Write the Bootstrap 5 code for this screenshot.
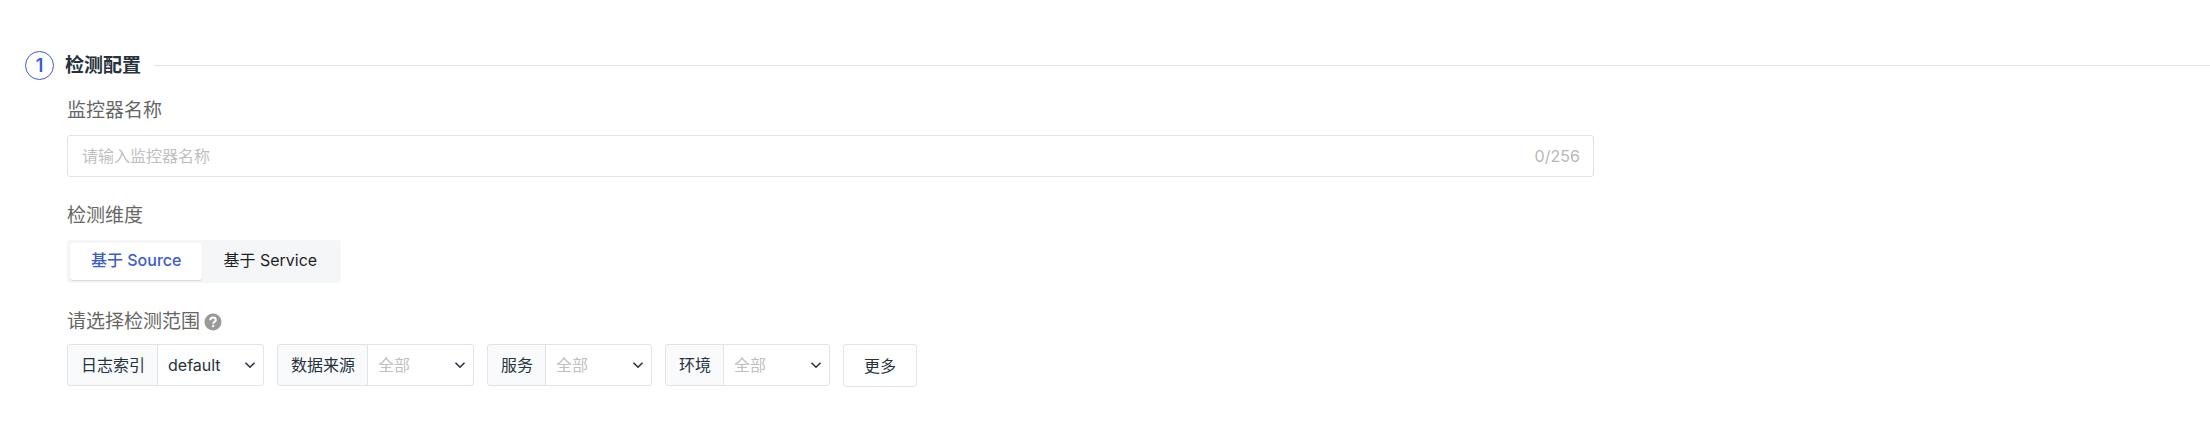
<!DOCTYPE html>
<html lang="zh-CN">
<head>
<meta charset="utf-8">
<meta name="viewport" content="width=device-width, initial-scale=1">
<title>检测配置</title>
<link href="https://cdn.jsdelivr.net/npm/bootstrap@5.3.0/dist/css/bootstrap.min.css" rel="stylesheet">
<style>
  body {
    --line: #e1e3e5;
    --ink: #26323c;
    --brand: #3a5ccc;
    font-family: Inter, "Noto Sans CJK SC", sans-serif;
    font-size: 16px;
    line-height: 24px;
    color: var(--ink);
    background: #fff;
  }
  .config-step { padding: 51px 0 54px 25px; }
  .step-no {
    width: 29px;
    height: 29px;
    border: 1px solid var(--brand);
    color: var(--brand);
    font-size: 18px;
    font-weight: 600;
  }
  .step-title { font-size: 19px; line-height: 28px; font-weight: 600; margin: 0 13px 0 11px; padding-top: 1px; }
  .step-rule { border-top: 1px solid var(--line); }
  .step-body { padding: 17px 0 0 42px; }
  .field { margin-bottom: 25px; }
  .field-label { font-size: 19px; line-height: 28px; color: #666; margin-bottom: 10px; }
  .name-box { width: 71.25%; border: 1px solid var(--line); border-radius: 3px; height: 42px; padding: 0 13px 0 14px; }
  .name-box:focus-within { border-color: var(--brand); }
  .name-box .form-control { font-size: 16px; color: var(--ink); box-shadow: none; }
  .name-box .form-control::placeholder { color: #bfbfbf; }
  .counter { color: #b8b8b8; }
  .segment { background: #f5f6f8; border-radius: 3px; padding: 3px; }
  .segment .btn {
    --bs-btn-color: #1d1f22;
    --bs-btn-hover-color: var(--brand);
    --bs-btn-active-color: var(--brand);
    --bs-btn-active-bg: #fff;
    --bs-btn-border-width: 0;
    --bs-btn-border-radius: 3px;
    font-size: 16px;
    line-height: 24px;
    padding: 5px 21px 8px;
  }
  .segment .btn-check:checked + .btn { font-weight: 500; box-shadow: 0 1px 1px #d4d6da; }
  .filters { gap: 13px; }
  .filter { width: auto; height: 42px; }
  .filter .input-group-text {
    font-size: 16px;
    line-height: 24px;
    color: var(--ink);
    background: #f9fafc;
    border-color: var(--line);
    border-radius: 3px;
    padding: 0 12px 0 13px;
  }
  .filter .form-select {
    --bs-form-select-bg-img: url("data:image/svg+xml,%3Csvg xmlns='http://www.w3.org/2000/svg' viewBox='0 0 12 12'%3E%3Cpath d='M1.5 3.8 6 8.2l4.500-4.400' fill='none' stroke='%2326323c' stroke-width='1.600'/%3E%3C/svg%3E");
    flex: none;
    width: 107px;
    font-size: 16px;
    line-height: 24px;
    color: var(--ink);
    border-color: var(--line);
    border-radius: 3px;
    padding: 0 24px 0 10px;
    background-position: right 7px center;
    background-size: 12px 12px;
  }
  .filter .form-select.unset { color: #bfbfbf; }
  .more-btn {
    --bs-btn-color: var(--ink);
    --bs-btn-border-color: var(--line);
    --bs-btn-hover-border-color: var(--brand);
    --bs-btn-border-radius: 3px;
    font-size: 16px;
    line-height: 24px;
    height: 43px;
    padding: 0 20px;
  }
</style>
</head>
<body>
<main class="config-step">
  <header class="d-flex align-items-center">
    <span class="step-no rounded-circle d-flex align-items-center justify-content-center">1</span>
    <h1 class="step-title">检测配置</h1>
    <div class="step-rule flex-grow-1"></div>
  </header>
  <form class="step-body">
    <div class="field">
      <label class="field-label d-block" for="monitor-name">监控器名称</label>
      <div class="name-box d-flex align-items-center">
        <input type="text" class="form-control border-0 p-0 flex-grow-1" id="monitor-name" maxlength="256" placeholder="请输入监控器名称">
        <span class="counter">0/256</span>
      </div>
    </div>
    <div class="field" role="radiogroup" aria-labelledby="dimension-label">
      <div class="field-label" id="dimension-label">检测维度</div>
      <div class="segment d-inline-flex align-top">
        <input type="radio" class="btn-check" name="dimension" id="by-source" checked>
        <label class="btn" for="by-source">基于 Source</label>
        <input type="radio" class="btn-check" name="dimension" id="by-service">
        <label class="btn" for="by-service">基于 Service</label>
      </div>
    </div>
    <div class="field-label d-flex align-items-center mb-2">请选择检测范围
      <svg class="ms-1" width="18" height="18" viewBox="0 0 18 18" aria-hidden="true">
        <circle cx="9" cy="9" r="8.500" fill="#999"/>
        <path d="M6.300 7.200C6.300 5.400 7.500 4.500 9.100 4.500s2.700.9 2.700 2.400c0 1.900-2.600 1.800-2.600 3.900" fill="none" stroke="#fff" stroke-width="2"/>
        <circle cx="9.200" cy="13" r="1.200" fill="#fff"/>
      </svg>
    </div>
    <div class="filters d-flex flex-wrap">
      <div class="filter input-group flex-nowrap">
        <label class="input-group-text" for="log-index">日志索引</label>
        <select class="form-select" id="log-index"><option>default</option></select>
      </div>
      <div class="filter input-group flex-nowrap">
        <label class="input-group-text" for="data-source">数据来源</label>
        <select class="form-select unset" id="data-source"><option>全部</option></select>
      </div>
      <div class="filter input-group flex-nowrap">
        <label class="input-group-text" for="service">服务</label>
        <select class="form-select unset" id="service"><option>全部</option></select>
      </div>
      <div class="filter input-group flex-nowrap">
        <label class="input-group-text" for="environment">环境</label>
        <select class="form-select unset" id="environment"><option>全部</option></select>
      </div>
      <button type="button" class="btn more-btn">更多</button>
    </div>
  </form>
</main>
<script src="https://cdn.jsdelivr.net/npm/bootstrap@5.3.0/dist/js/bootstrap.bundle.min.js"></script>
</body>
</html>
